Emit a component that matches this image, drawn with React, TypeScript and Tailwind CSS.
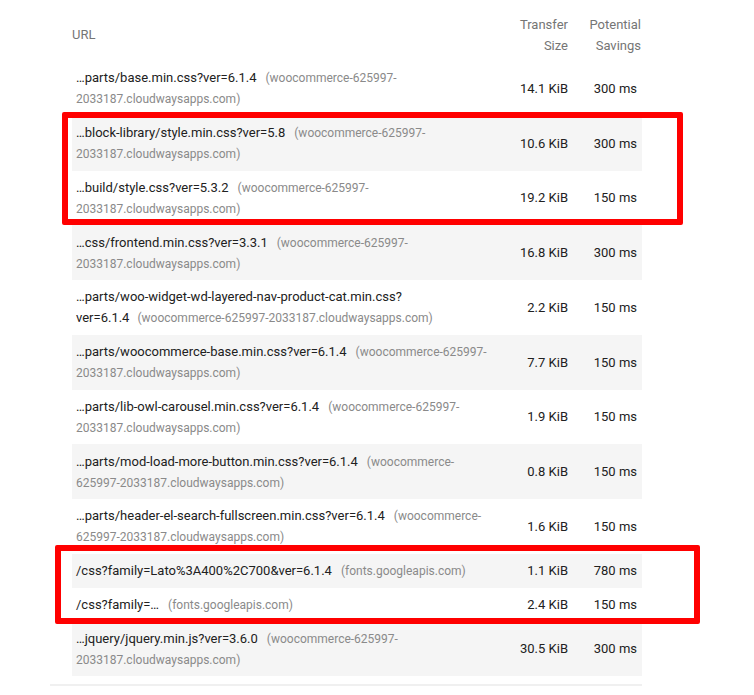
type Row = {
  main: string;
  host: string;
  main2?: string;
  host2?: string;
  size: string;
  savings: string;
};

const rows: Row[] = [
  { main: '…parts/base.min.css?ver=6.1.4', host: '(woocommerce-625997-', host2: '2033187.cloudwaysapps.com)', size: '14.1 KiB', savings: '300 ms' },
  { main: '…block-library/style.min.css?ver=5.8', host: '(woocommerce-625997-', host2: '2033187.cloudwaysapps.com)', size: '10.6 KiB', savings: '300 ms' },
  { main: '…build/style.css?ver=5.3.2', host: '(woocommerce-625997-', host2: '2033187.cloudwaysapps.com)', size: '19.2 KiB', savings: '150 ms' },
  { main: '…css/frontend.min.css?ver=3.3.1', host: '(woocommerce-625997-', host2: '2033187.cloudwaysapps.com)', size: '16.8 KiB', savings: '300 ms' },
  { main: '…parts/woo-widget-wd-layered-nav-product-cat.min.css?', host: '', main2: 'ver=6.1.4', host2: '(woocommerce-625997-2033187.cloudwaysapps.com)', size: '2.2 KiB', savings: '150 ms' },
  { main: '…parts/woocommerce-base.min.css?ver=6.1.4', host: '(woocommerce-625997-', host2: '2033187.cloudwaysapps.com)', size: '7.7 KiB', savings: '150 ms' },
  { main: '…parts/lib-owl-carousel.min.css?ver=6.1.4', host: '(woocommerce-625997-', host2: '2033187.cloudwaysapps.com)', size: '1.9 KiB', savings: '150 ms' },
  { main: '…parts/mod-load-more-button.min.css?ver=6.1.4', host: '(woocommerce-', host2: '625997-2033187.cloudwaysapps.com)', size: '0.8 KiB', savings: '150 ms' },
  { main: '…parts/header-el-search-fullscreen.min.css?ver=6.1.4', host: '(woocommerce-', host2: '625997-2033187.cloudwaysapps.com)', size: '1.6 KiB', savings: '150 ms' },
  { main: '/css?family=Lato%3A400%2C700&ver=6.1.4', host: '(fonts.googleapis.com)', size: '1.1 KiB', savings: '780 ms' },
  { main: '/css?family=…', host: '(fonts.googleapis.com)', size: '2.4 KiB', savings: '150 ms' },
  { main: '…jquery/jquery.min.js?ver=3.6.0', host: '(woocommerce-625997-', host2: '2033187.cloudwaysapps.com)', size: '30.5 KiB', savings: '300 ms' },
];

const App = () => {
  return (
    <div className="relative w-[754px] h-[695px] bg-white overflow-hidden font-['Roboto','Liberation_Sans',sans-serif] text-[13px] leading-[21px] text-[#212121]">
      <div className="ml-[72px] w-[570px]">
        {/* header */}
        <div className="grid grid-cols-[420px_76px_74px] items-center h-[61px] pt-[8px] text-[#757575]">
          <div>URL</div>
          <div className="text-right">
            <div>Transfer</div>
            <div>Size</div>
          </div>
          <div className="text-right pr-[1px]">
            <div>Potential</div>
            <div>Savings</div>
          </div>
        </div>

        {rows.map((r, i) => {
          const twoLines = !!(r.main2 || r.host2);
          return (
            <div
              key={i}
              className={`grid grid-cols-[420px_76px_74px] items-center ${twoLines ? 'h-[54.75px]' : 'h-[33.75px]'} ${i % 2 === 1 ? 'bg-[#f5f5f5]' : 'bg-white'}`}
            >
              <div className="pl-[4px] whitespace-nowrap">
                <div className="h-[21px] leading-[21px]">
                  <span>{r.main}</span>
                  {r.host && <span className="ml-[9px] text-[12px] leading-[21px] text-[#8a8a8a]">{r.host}</span>}
                </div>
                {twoLines && (
                  <div className="h-[21px] leading-[21px]">
                    {r.main2 && <span className="mr-[8px]">{r.main2}</span>}
                    <span className="text-[12px] leading-[21px] text-[#8a8a8a]">{r.host2}</span>
                  </div>
                )}
              </div>
              <div className="text-right whitespace-nowrap">{r.size}</div>
              <div className="text-right pr-[5px] whitespace-nowrap">{r.savings}</div>
            </div>
          );
        })}
      </div>
      <div className="ml-[50px] mt-[8px] w-[592px] h-[2px] bg-[#f0f0f0]" />

      {/* highlight boxes */}
      <div className="absolute left-[62px] top-[112px] w-[621px] h-[113px] border-[6px] border-[#ff0000] rounded-[2px]" />
      <div className="absolute left-[55px] top-[545px] w-[645px] h-[79px] border-[6px] border-[#ff0000] rounded-[2px]" />
    </div>
  );
};

export default App;
